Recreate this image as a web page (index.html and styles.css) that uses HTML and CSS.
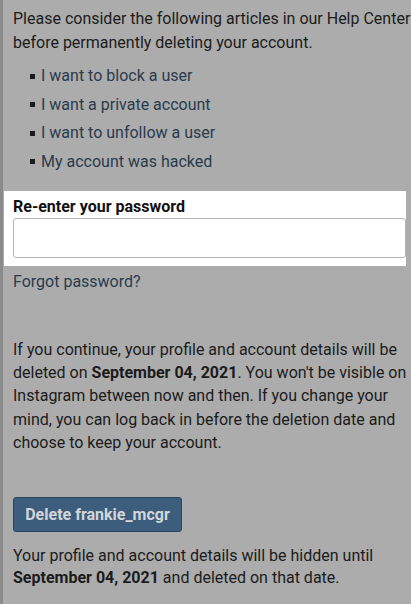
FILE: index.html
```html
<!DOCTYPE html>
<html>
<head>
<meta charset="utf-8">
<link rel="stylesheet" href="styles.css">
</head>
<body>
<div class="page">
  <p class="intro">Please consider the following articles in our Help Center before permanently deleting your account.</p>
  <ul class="articles">
    <li><a href="#">I want to block a user</a></li>
    <li><a href="#">I want a private account</a></li>
    <li><a href="#">I want to unfollow a user</a></li>
    <li><a href="#">My account was hacked</a></li>
  </ul>
  <div class="pw-panel">
    <label class="pw-label" for="pw">Re-enter your password</label>
    <input class="pw-input" id="pw" type="password">
  </div>
  <a class="forgot" href="#">Forgot password?</a>
  <p class="info">If you continue, your profile and account details will be deleted on <b>September 04, 2021</b>. You won't be visible on Instagram between now and then. If you change your mind, you can log back in before the deletion date and choose to keep your account.</p>
  <button class="delete-btn">Delete frankie_mcgr</button>
  <p class="note">Your profile and account details will be hidden until <b>September 04, 2021</b> and deleted on that date.</p>
</div>
</body>
</html>
```
FILE: styles.css
```css
html, body {
  margin: 0;
  padding: 0;
  background: #acacac;
}
body {
  font-family: Roboto, "Noto Sans", sans-serif;
  font-size: 16px;
  color: #1b1b1b;
}
.page {
  border-left: 3px solid #8a8a8a;
  min-height: 604px;
  box-sizing: border-box;
  padding: 7px 0 0 10px;
  overflow: hidden;
}
.intro {
  margin: 0;
  line-height: 24px;
  width: 400px;
}
.articles {
  list-style: none;
  margin: 7px 0 0 0;
  padding: 0 0 0 17px;
}
.articles li {
  line-height: 28.5px;
  display: flex;
  align-items: center;
}
.articles li::before {
  content: "";
  width: 5px;
  height: 5px;
  background: #1b1b1b;
  margin-right: 6px;
}
.articles a, .forgot {
  color: #2a3b4c;
  text-decoration: none;
}
.pw-panel {
  background: #ffffff;
  margin: 15px 0 0 -9px;
  padding: 5px 0 8px 9px;
  width: 393px;
  display: flex;
  flex-direction: column;
}
.pw-label {
  font-weight: 700;
  line-height: 22px;
  color: #111;
}
.pw-input {
  margin-top: 0;
  height: 40px;
  box-sizing: border-box;
  border: 1px solid #b5b5b5;
  border-radius: 3px;
  width: 393px;
  background: #fff;
}
.forgot {
  display: block;
  margin-top: 6px;
  line-height: 20px;
}
.info {
  margin: 46px 0 0 0;
  line-height: 23.2px;
  width: 400px;
}
.delete-btn {
  display: block;
  margin-top: 43px;
  width: 169px;
  height: 35px;
  background: #3c5d7c;
  border: 1px solid #2a4762;
  border-radius: 3px;
  color: #d2d6da;
  font-family: Roboto, "Noto Sans", sans-serif;
  font-size: 16px;
  font-weight: 700;
  padding: 0;
}
.note {
  margin: 13px 0 0 0;
  line-height: 22px;
  width: 400px;
}
```
